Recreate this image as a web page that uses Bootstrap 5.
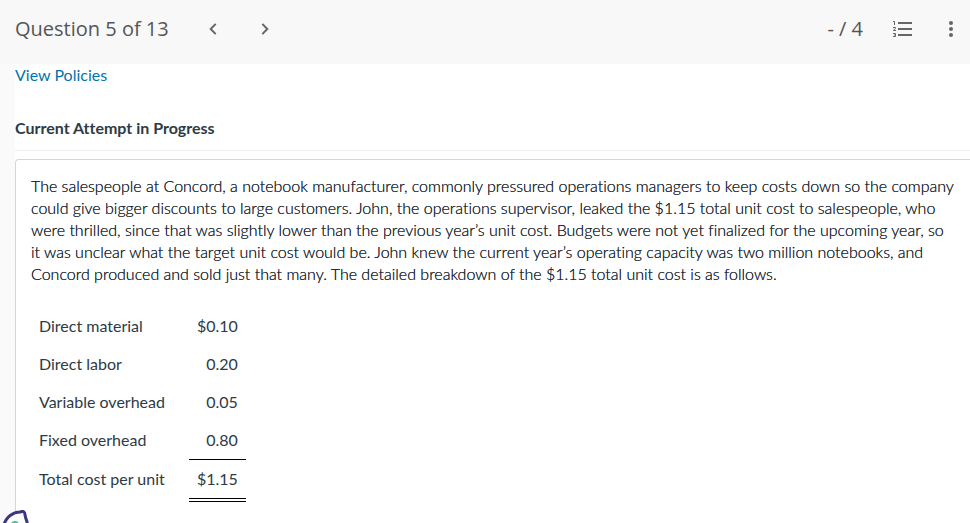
<!DOCTYPE html>
<html lang="en">
<head>
<meta charset="utf-8">
<meta name="viewport" content="width=device-width, initial-scale=1">
<title>Question 5 of 13</title>
<link href="https://cdn.jsdelivr.net/npm/bootstrap@5.3.0/dist/css/bootstrap.min.css" rel="stylesheet">
<style>
  body { font-family: Lato, "Open Sans", sans-serif; font-size: 16px; line-height: 22px; font-variant-ligatures: none; color: #2d3b45; background: #fafafa; }
  .question-bar { min-height: 64px; padding: 0 3px 6px 15px; background: #f8f8f8; color: #555; font-family: "Open Sans", sans-serif; font-size: 20px; }
  .question-title { font-size: 20px; line-height: 28px; font-weight: 400; }
  .icon-button { width: 32px; height: 32px; color: #666; }
  .step-nav { margin-left: 28px; gap: 20px; }
  .tools { gap: 16px; }
  .score { margin-right: 8px; }
  .question-main { margin-left: 15px; }
  .policy-link { color: #0374a8; }
  .attempt-title { font-size: 16px; line-height: 22px; margin-top: 31px; padding-bottom: 11px; border-bottom: 1px solid #eee; }
  .question-card { margin-top: 8px; padding: 15px; border: 1px solid #d6d6d6; border-radius: 4px 0 0 0; }
  .question-text { margin-bottom: 22px; font-weight: 300; color: #1c2a34; text-shadow: 0 0 0 #1c2a34; }
  .cost-table th, .cost-table td { padding: 8px; font-weight: 400; vertical-align: middle; }
  .cost-table th { padding-right: 24px; }
  .cost-table .addend-last { padding-bottom: 7px; border-bottom: 1px solid #000; }
  .cost-table .grand-total { border-bottom: 4px double #000; }
  .assist-button { position: fixed; left: 1px; bottom: -19px; width: 32px; height: 32px; }
</style>
</head>
<body class="d-flex flex-column min-vh-100">
<header class="question-bar d-flex align-items-center justify-content-between">
  <div class="d-flex align-items-center">
    <h1 class="question-title mb-0">Question 5 of 13</h1>
    <nav class="step-nav d-flex" aria-label="Questions">
      <button type="button" class="icon-button btn p-0 border-0 d-flex align-items-center justify-content-center" aria-label="Previous question">
        <svg width="8" height="12" viewBox="0 0 8 12" fill="none" stroke="currentColor" stroke-width="2" aria-hidden="true"><path d="M6.7 .9 1.7 6l5 5.1"/></svg>
      </button>
      <button type="button" class="icon-button btn p-0 border-0 d-flex align-items-center justify-content-center" aria-label="Next question">
        <svg width="8" height="12" viewBox="0 0 8 12" fill="none" stroke="currentColor" stroke-width="2" aria-hidden="true"><path d="m1.3 .9 5 5.1-5 5.1"/></svg>
      </button>
    </nav>
  </div>
  <div class="tools d-flex align-items-center">
    <span class="score">- / 4</span>
    <button type="button" class="icon-button btn p-0 border-0 d-flex align-items-center justify-content-center" aria-label="Question list">
      <svg width="20" height="16" viewBox="0 0 20 16" fill="none" stroke="currentColor" aria-hidden="true"><path stroke-width="2" d="M5 2h14M5 8h14M5 14h14"/><path stroke-width="1" d="M0 .5h1.5V4M0 6.500h2.500v1L.5 9v.5H3M0 12.500h2.500v3H0M1 14h1.500"/></svg>
    </button>
    <button type="button" class="icon-button btn p-0 border-0 d-flex align-items-center justify-content-center" aria-label="More options">
      <svg width="4" height="16" viewBox="0 0 4 16" fill="currentColor" aria-hidden="true"><circle cx="2" cy="2" r="2"/><circle cx="2" cy="8" r="2"/><circle cx="2" cy="14" r="2"/></svg>
    </button>
  </div>
</header>
<main class="question-main bg-white flex-grow-1 d-flex flex-column">
  <div><a href="#policies" class="policy-link text-decoration-none">View Policies</a></div>
  <h2 class="attempt-title mb-0 fw-bold">Current Attempt in Progress</h2>
  <section class="question-card flex-grow-1 border-end-0 border-bottom-0">
    <p class="question-text">The salespeople at Concord, a notebook manufacturer, commonly pressured operations managers to keep costs down so the company could give bigger discounts to large customers. John, the operations supervisor, leaked the $1.15 total unit cost to salespeople, who were thrilled, since that was slightly lower than the previous year’s unit cost. Budgets were not yet finalized for the upcoming year, so it was unclear what the target unit cost would be. John knew the current year’s operating capacity was two million notebooks, and Concord produced and sold just that many. The detailed breakdown of the $1.15 total unit cost is as follows.</p>
    <table class="cost-table">
      <tbody>
        <tr><th scope="row">Direct material</th><td class="text-end">$0.10</td></tr>
        <tr><th scope="row">Direct labor</th><td class="text-end">0.20</td></tr>
        <tr><th scope="row">Variable overhead</th><td class="text-end">0.05</td></tr>
        <tr><th scope="row">Fixed overhead</th><td class="addend-last text-end">0.80</td></tr>
        <tr><th scope="row">Total cost per unit</th><td class="grand-total text-end">$1.15</td></tr>
      </tbody>
    </table>
  </section>
</main>
<button type="button" class="assist-button btn p-0 border-0 d-flex" aria-label="Open assistant">
  <svg width="32" height="32" viewBox="0 0 32 32" aria-hidden="true"><path d="M3 15C5 7 12 2 19 2q5-2 5 3l1 4q2 4 1 8a11 11 0 0 1-23-2z" fill="#fff" stroke="#3d3580" stroke-width="3"/><circle cx="14" cy="15" r="4" fill="#3fc79a"/></svg>
</button>
<script src="https://cdn.jsdelivr.net/npm/bootstrap@5.3.0/dist/js/bootstrap.bundle.min.js"></script>
</body>
</html>
